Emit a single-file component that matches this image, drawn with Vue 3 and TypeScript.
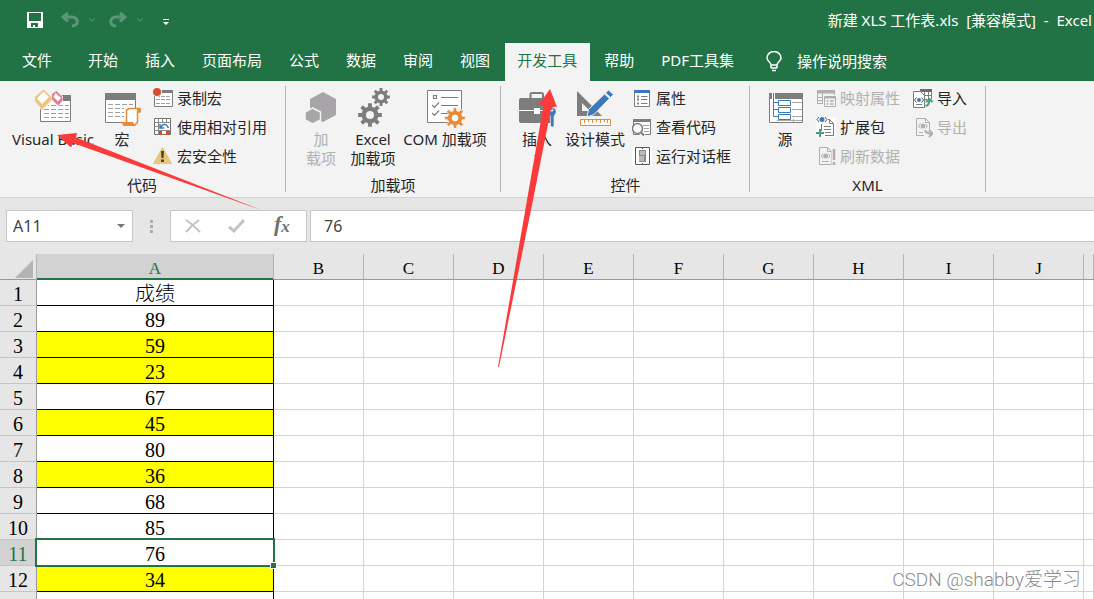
<script setup lang="ts">
import { ref } from 'vue'

interface SheetRow {
  n: number
  value: string
  marked: boolean
}

const tabs: string[] = ['文件', '开始', '插入', '页面布局', '公式', '数据', '审阅', '视图', '开发工具', '帮助', 'PDF工具集']
const activeTab = ref('开发工具')

const columns: string[] = ['A', 'B', 'C', 'D', 'E', 'F', 'G', 'H', 'I', 'J']
const values: string[] = ['成绩', '89', '59', '23', '67', '45', '80', '36', '68', '85', '76', '34']
const rows: SheetRow[] = values.map((value, i) => ({
  n: i + 1,
  value,
  marked: Number(value) < 60,
}))
const selectedRow = 11

const nameBox = ref('A11')
const formula = ref('76')

function gear(cx: number, cy: number, outer: number, inner: number, hole: number, teeth = 8): string {
  const points: string[] = []
  const step = (Math.PI * 2) / teeth
  const at = (r: number, a: number) => `${(cx + r * Math.cos(a)).toFixed(2)} ${(cy + r * Math.sin(a)).toFixed(2)}`
  for (let i = 0; i < teeth; i++) {
    const a = i * step
    points.push(at(inner, a - step * 0.3), at(outer, a - step * 0.2), at(outer, a + step * 0.2), at(inner, a + step * 0.3))
  }
  return `M${points.join('L')}ZM${cx - hole} ${cy}a${hole} ${hole} 0 1 0 ${hole * 2} 0a${hole} ${hole} 0 1 0 ${-hole * 2} 0Z`
}

const bigGear = gear(17, 27, 12, 8.5, 4)
const smallGear = gear(28, 9, 9, 6.5, 3)
const orangeGear = gear(30, 30, 10.5, 7.5, 3)
</script>

<template>
  <div class="window">
    <header class="top">
      <div class="titlebar">
        <div class="quick">
          <button class="q save" aria-label="保存">
            <svg width="16" height="16" viewBox="0 0 16 16"><path fill="#fff" fill-rule="evenodd" d="M0 0H16V16H0ZM2 1V9H14V1ZM4 11V15H6V13H8V15H11V11Z" /></svg>
          </button>
          <button class="q undo" aria-label="撤消">
            <svg width="18" height="16" viewBox="0 0 18 16" fill="none" stroke="#5b967a" stroke-width="3"><path d="M7 1L2 5L7 9.500M2 5H11C18 5 18 14 11 14" /></svg>
          </button>
          <button class="q chev" aria-label="撤消选项">
            <svg width="6" height="4" viewBox="0 0 6 4" fill="none" stroke="#5b967a"><path d="M0 .5L3 3L6 .5" /></svg>
          </button>
          <button class="q redo" aria-label="恢复">
            <svg width="18" height="16" viewBox="0 0 18 16" fill="none" stroke="#5b967a" stroke-width="3"><path d="M11 1L16 5L11 9.500M16 5H7C0 5 0 14 7 14" /></svg>
          </button>
          <button class="q chev" aria-label="恢复选项">
            <svg width="6" height="4" viewBox="0 0 6 4" fill="none" stroke="#5b967a"><path d="M0 .5L3 3L6 .5" /></svg>
          </button>
          <button class="q more" aria-label="自定义快速访问工具栏">
            <svg width="6" height="6" viewBox="0 0 6 6" fill="#fff"><path d="M0 0H6V1H0ZM0 3H6L3 6Z" /></svg>
          </button>
        </div>
        <div class="title">新建 XLS 工作表.xls&nbsp; [兼容模式]&nbsp; -&nbsp; Excel</div>
      </div>
      <nav class="tabs">
        <button v-for="t in tabs" :key="t" class="tab" :class="{ active: t === activeTab }" @click="activeTab = t">{{ t }}</button>
        <button class="tell">
          <svg width="16" height="21" viewBox="0 0 16 21" fill="none" stroke="#fff" stroke-width="1.500"><path d="M5 14C5 11 1 10.500 1 7A7 6.500 0 0 1 15 7C15 10.500 11 11 11 14ZM5 17H11M6 19.500H10M5 14V17M11 14V17" /></svg>
          <span>操作说明搜索</span>
        </button>
      </nav>
    </header>

    <section class="ribbon">
      <div class="group g-code">
        <div class="items">
          <button class="big w-vb">
            <svg width="40" height="40" viewBox="0 0 40 40">
              <path fill="#fff" stroke="#7d7d7d" d="M7.500 7.500H37.500V33.500H7.500Z" />
              <path fill="#7d7d7d" d="M30 7H38V13H30Z" />
              <path fill="none" stroke="#a0a0a0" stroke-dasharray="5 2" d="M11 17.500H36M11 21.500H36M11 25.500H36M11 29.500H36" />
              <path fill="#f3f3f3" d="M7 6H29V13L25 19L19 14L9 23L6 19Z" />
              <path fill="#ecc57c" d="M10.500 1.500L18.500 9V12L9 21.500L2 13V9Z" />
              <path fill="#fff" d="M10.500 3.500L16 9L9 16L4 10.500Z" />
              <path fill="#e27d94" d="M23.500 3L29.500 9V13L25 17.500L19 11.500V6Z" />
              <path fill="#fff" d="M22.500 5L28 10L25 13.500L20.500 9Z" />
            </svg>
            <span>Visual Basic</span>
          </button>
          <button class="big w-s macro">
            <svg width="40" height="40" viewBox="0 0 40 40">
              <path fill="#fff" stroke="#7d7d7d" d="M3.500 5.500H33.500V34.500H3.500Z" />
              <path fill="#7d7d7d" d="M3 5H34V12H3Z" />
              <path fill="none" stroke="#a0a0a0" stroke-dasharray="5 2" d="M6 16.500H31M6 20.500H22M6 24.500H22M6 28.500H22" />
              <path fill="#fff" stroke="#e68a3c" stroke-width="1.500" d="M24.500 22L27 20.500H38V24H35.500V34L33 37H24.500Z" />
              <path fill="#e68a3c" d="M20 34H31L33 38H22Q20 37 20 34ZM35 20H37Q39 20 39 24H35Z" />
            </svg>
            <span>宏</span>
          </button>
          <div class="stack">
            <button class="small">
              <svg width="20" height="21" viewBox="0 0 20 21">
                <path fill="#fff" stroke="#7d7d7d" d="M1.500 2.500H19.500V18.500H1.500Z" /><path fill="#7d7d7d" d="M8 2H20V5H8Z" />
                <path fill="none" stroke="#a0a0a0" stroke-dasharray="4 1" d="M3 8.500H18M3 11.500H18M3 15.500H18" />
                <circle cx="4" cy="4" r="5" fill="#f3f3f3" /><circle cx="4" cy="4" r="4" fill="#d2502c" />
              </svg>
              <span>录制宏</span>
            </button>
            <button class="small">
              <svg width="20" height="21" viewBox="0 0 20 21">
                <path fill="#fff" stroke="#6d6d6d" d="M1.500 1.500H17.500V17.500H1.500Z" />
                <path fill="none" stroke="#8a8a8a" d="M1 5.500H18M1 9.500H5M1 13.500H18M5.500 1V18M9.500 1V5M13.500 1V5" />
                <path fill="#fff" d="M6 6H17V13H6Z" />
                <path fill="none" stroke="#3c79b9" stroke-width="1.500" d="M7 7V11H11M7.500 10.500Q12 4 15.500 11" />
                <path fill="#d2502c" d="M6 14H9V18H6ZM13 14H17V18H13Z" />
              </svg>
              <span>使用相对引用</span>
            </button>
            <button class="small">
              <svg width="20" height="21" viewBox="0 0 20 21">
                <path fill="#ecc57c" stroke="#ecc57c" stroke-linejoin="round" d="M9.500 1.500L18.500 17.500H.5Z" />
                <path fill="#444" d="M8 5H11L10.500 12H8.500ZM8 13.500H11V16H8Z" />
              </svg>
              <span>宏安全性</span>
            </button>
          </div>
        </div>
        <div class="caption">代码</div>
      </div>

      <div class="group g-addins">
        <div class="items">
          <button class="big w-s" disabled>
            <svg width="40" height="40" viewBox="0 0 40 40" fill="#a8a5a8">
              <path d="M22 4L35 11V27L22 34L9 27V11Z" />
              <path stroke="#f3f3f3" stroke-width="1.500" d="M11.500 20L19.500 24V32L11.500 36L4 32V24Z" />
            </svg>
            <span>加<br />载项</span>
          </button>
          <button class="big w-m">
            <svg width="40" height="40" viewBox="0 0 40 40" fill="#7d7d7d" fill-rule="evenodd"><path :d="bigGear" /><path :d="smallGear" /></svg>
            <span>Excel<br />加载项</span>
          </button>
          <button class="big w-com">
            <svg width="40" height="40" viewBox="0 0 40 40">
              <path fill="#fff" stroke="#7d7d7d" d="M2.500 2.500H36.500V34.500H2.500Z" />
              <path fill="none" stroke="#7d7d7d" stroke-width="1.200" d="M8.500 7.500H11.500V10.500H8.500ZM16 9.500H33M7 17L9.500 19.500L14 14.500M16 17.500H33M7 25L9.500 27.500L14 22.500M16 25.500H24" />
              <path fill="#e68a3c" stroke="#fff" stroke-width=".7" fill-rule="evenodd" :d="orangeGear" />
            </svg>
            <span>COM 加载项</span>
          </button>
        </div>
        <div class="caption">加载项</div>
      </div>

      <div class="group g-controls">
        <div class="items">
          <button class="big w-s">
            <svg width="40" height="40" viewBox="0 0 40 40">
              <path fill="none" stroke="#7d7d7d" stroke-width="2" d="M13.500 10V6.500Q13.500 5 15 5H24.500Q26 5 26 6.500V10" />
              <rect x="2" y="10" width="35" height="25" rx="2" fill="#7d7d7d" />
              <path fill="#fff" d="M2 22H37V23H2ZM17 20H23V26H17Z" />
              <path fill="#3c79b9" stroke="#f3f3f3" stroke-width=".6" d="M33 19V23H36V19Q40 21 39 25L37 28V38Q35.500 40 33.500 38V28L31 25Q30 21 33 19Z" />
            </svg>
            <span>插入</span>
            <i class="caret"></i>
          </button>
          <button class="big w-design">
            <svg width="40" height="40" viewBox="0 0 40 40">
              <path fill="#7d7d7d" fill-rule="evenodd" d="M2 3L27 28H2ZM7 15V23H15Z" />
              <path fill="#3c79b9" stroke="#f3f3f3" d="M12 29L13.500 21.500L29.500 6L34.500 10.500L19 26.500ZM30.500 5L33.500 2L38.500 6.500L35.500 9.500Z" />
              <path fill="#fff" stroke="#e68a3c" d="M5.500 31.500H35.500V37.500H5.500Z" />
              <path fill="none" stroke="#e68a3c" d="M9.500 32V35M13.500 32V34M17.500 32V35M21.500 32V34M25.500 32V35M29.500 32V34M32.500 32V35" />
            </svg>
            <span>设计模式</span>
          </button>
          <div class="stack">
            <button class="small">
              <svg width="20" height="21" viewBox="0 0 20 21">
                <path fill="#fff" stroke="#7d7d7d" d="M2.500 2.500H17.500V18.500H2.500Z" /><path fill="#3c79b9" d="M2 2H18V5H2Z" />
                <path fill="none" stroke="#7d7d7d" d="M9 8.500H15.500M9 11.500H15.500M9 15.500H15.500" />
                <path fill="none" stroke="#7d7d7d" stroke-width="2" d="M5 8.500H7M5 11.500H7M5 15.500H7" />
              </svg>
              <span>属性</span>
            </button>
            <button class="small">
              <svg width="20" height="21" viewBox="0 0 20 21">
                <path fill="#fff" stroke="#7d7d7d" d="M1.500 2.500H18.500V17.500H1.500Z" /><path fill="#7d7d7d" d="M1 2H19V5H1Z" />
                <path fill="none" stroke="#a0a0a0" d="M11 8.500H17M12 11.500H17M12 14.500H17" />
                <path stroke="#f3f3f3" stroke-width="4" d="M8 15L12 19" />
                <circle cx="5.500" cy="11.500" r="5" fill="#fff" stroke="#7d7d7d" stroke-width="1.500" />
                <path stroke="#7d7d7d" stroke-width="2" d="M8.500 15L12 18.500" />
              </svg>
              <span>查看代码</span>
            </button>
            <button class="small">
              <svg width="20" height="21" viewBox="0 0 20 21">
                <path fill="#fff" d="M0 0H20V20H0Z" /><path fill="none" stroke="#555" d="M3.500 1.500H17.500V18.500H3.500Z" />
                <path fill="#8a8a8a" d="M7 4H14V16H7Z" /><path fill="#b9b9b9" d="M8 5H13V9H8ZM7 10H12V15H7Z" /><path fill="#555" d="M10 2H11V3H10ZM10 17H11V18H10Z" />
              </svg>
              <span>运行对话框</span>
            </button>
          </div>
        </div>
        <div class="caption">控件</div>
      </div>

      <div class="group g-xml">
        <div class="items">
          <button class="big w-s">
            <svg width="40" height="40" viewBox="0 0 40 40">
              <path fill="#fff" stroke="#7d7d7d" d="M4.500 5.500H37.500V34.500H4.500Z" /><path fill="#7d7d7d" d="M4 5H38V11H4Z" />
              <path stroke="#a8a8a8" d="M27 14.500H37M27 21.500H37M27 28.500H37M12 32.500H37M28.500 31V34" />
              <path fill="none" stroke="#fff" stroke-width="3" d="M8.500 5V11" />
              <path fill="#fff" stroke="#3c79b9" d="M8.500 5V28.500H13M8.500 14.500H13M8.500 21.500H13M13.500 12.500H25.500V17.500H13.500ZM13.500 19.500H25.500V24.500H13.500ZM13.500 26.500H25.500V31.500H13.500Z" />
            </svg>
            <span>源</span>
          </button>
          <div class="stack">
            <button class="small" disabled>
              <svg width="20" height="21" viewBox="0 0 20 21" fill="#f3f3f3" stroke="#b1aeb1">
                <path d="M1.500 2.500H18.500V15.500H1.500Z" /><path fill="#b1aeb1" d="M1.500 2.500H18.500V5H1.500Z" />
                <path d="M1 9.500H8M1 12.500H8M6.500 5V15" /><path stroke="none" d="M7 7H20V20H7Z" /><path d="M8.500 8.500H19.500V18.500H8.500Z" /><path stroke-width="2" d="M8 9.500H20" /><path stroke-width="1.500" d="M10.500 13H12.500M14 13H17.500M10.500 16H12.500M14 16H17.500" />
              </svg>
              <span>映射属性</span>
            </button>
            <button class="small">
              <svg width="20" height="21" viewBox="0 0 20 21">
                <path fill="#fff" d="M0 0H20V20H0Z" /><path fill="none" stroke="#7d7d7d" d="M5.500 7V14M9 18.500H17.500V6.500L13.500 2.500H12M13.500 2.500V6.500H17.500" />
                <path stroke="#7d7d7d" d="M8 9.500H15M8 12.500H15M9 15.500H15" />
                <circle cx="6" cy="2.500" r="2.500" fill="#3c79b9" /><path fill="none" stroke="#555" d="M3 0L1 2.500L3 5M9 0L11 2.500L9 5" />
                <path stroke="#4f9e83" stroke-width="2" d="M0 16H8M4 12V20" />
              </svg>
              <span>扩展包</span>
            </button>
            <button class="small" disabled>
              <svg width="20" height="21" viewBox="0 0 20 21" fill="none" stroke="#b1aeb1">
                <path d="M3.500 1.500H11.500L15.500 5.500V18.500H3.500ZM11.500 1.500V5.500H15.500M6 15.500H13" /><circle cx="9.500" cy="10" r="2" fill="#b1aeb1" /><path d="M7 7.500L5 10L7 12.500M12 7.500L14 10L12 12.500" /><path stroke="#f3f3f3" stroke-width="5" d="M18 2V19" /><path stroke-width="2.500" d="M18 3V14M18 16V19" />
              </svg>
              <span>刷新数据</span>
            </button>
          </div>
          <div class="stack">
            <button class="small">
              <svg width="20" height="21" viewBox="0 0 20 21">
                <path fill="#fff" stroke="#7d7d7d" d="M7.500 1.500H18.500V11.500H7.500Z" /><path fill="#6d6d6d" d="M7 1H19V4H7Z" /><path fill="none" stroke="#7d7d7d" d="M11.500 4V11M15.500 4V11M8 7.500H19" />
                <path fill="#fff" stroke="#7d7d7d" d="M.5 3.500H7.500L11.500 7.500V19.500H.5ZM3 16.500H9" /><circle cx="6" cy="12" r="2" fill="#3c79b9" /><path fill="none" stroke="#555" d="M3.500 9.500L1.500 12L3.500 14.500M8.500 9.500L10.500 12L8.500 14.500" />
                <path fill="none" stroke="#f3f3f3" stroke-width="4" d="M12.500 17.500Q16.500 17 16.500 11" /><path fill="none" stroke="#4f9e83" stroke-width="2" d="M12.500 18Q16.500 17.500 16.500 11M13 14L16.500 11L19.500 14" />
              </svg>
              <span>导入</span>
            </button>
            <button class="small" disabled>
              <svg width="20" height="21" viewBox="0 0 20 21" fill="none" stroke="#b1aeb1">
                <path d="M11 18.500H3.500V1.500H12.500L16.500 5.500V13M12.500 1.500V5.500H16.500M6 15.500H10" /><circle cx="10" cy="9" r="2" fill="#b1aeb1" /><path d="M7.500 6.500L5.500 9L7.500 11.500M12.500 6.500L14.500 9L12.500 11.500" /><path stroke-width="2" d="M12 13Q13 17 19 16.500M16 13L19.500 16.500L16 20" />
              </svg>
              <span>导出</span>
            </button>
          </div>
        </div>
        <div class="caption">XML</div>
      </div>
    </section>

    <section class="formula-bar">
      <div class="box name-box">
        <input v-model="nameBox" aria-label="名称框" />
        <button aria-label="名称列表"><i class="drop"></i></button>
      </div>
      <div class="dots"><i></i><i></i><i></i></div>
      <div class="box edit-box">
        <button aria-label="取消"><svg width="18" height="16" viewBox="0 0 18 16" fill="none" stroke="#c3c3c3" stroke-width="2"><path d="M2 2Q8 6 16 14M15 2Q8 7 2 14" /></svg></button>
        <button aria-label="输入"><svg width="18" height="16" viewBox="0 0 18 16" fill="none" stroke="#c3c3c3" stroke-width="3"><path d="M1 9L6 13L16 2" /></svg></button>
        <button class="fx" aria-label="插入函数">f<sub>x</sub></button>
      </div>
      <div class="box value-box"><input v-model="formula" aria-label="编辑栏" /></div>
    </section>

    <main class="sheet">
      <table>
        <colgroup>
          <col class="c-head" /><col class="c-a" /><col v-for="c in 9" :key="c" class="c-n" /><col />
        </colgroup>
        <thead>
          <tr>
            <th class="corner"><i></i></th>
            <th v-for="c in columns" :key="c" :class="{ current: c === 'A' }">{{ c }}</th>
            <th></th>
          </tr>
        </thead>
        <tbody>
          <tr v-for="r in rows" :key="r.n">
            <th :class="{ current: r.n === selectedRow }">{{ r.n }}</th>
            <td class="data" :class="{ marked: r.marked }">{{ r.value }}<div v-if="r.n === selectedRow" class="selection"></div></td>
            <td v-for="c in 10" :key="c"></td>
          </tr>
          <tr>
            <th></th>
            <td class="data"></td>
            <td v-for="c in 10" :key="c"></td>
          </tr>
        </tbody>
      </table>
    </main>

    <svg class="arrows" width="600" height="400" viewBox="0 0 600 400" fill="#fb3b3b">
      <path d="M57 135L77 133L76 137.500L261 210L73 143L71 147.500Z" />
      <path d="M550 89L557 107L551.500 106.500L533 200L499 367H498L527 200L543.500 105.500L538.500 105Z" />
    </svg>
    <div class="watermark">CSDN @shabby爱学习</div>
  </div>
</template>

<style>
body {
  margin: 0;
}
</style>

<style scoped>
.window {
  position: relative;
  display: flex;
  flex-direction: column;
  height: 100vh;
  overflow: hidden;
  background: #e6e6e6;
  color: #262626;
  font-family: "Noto Sans", "Noto Sans CJK SC", sans-serif;
  font-size: 15px;
  line-height: 19px;
}
button,
input {
  margin: 0;
  padding: 0;
  border: 0;
  background: none;
  color: inherit;
  font: inherit;
}
svg {
  display: block;
  flex: none;
}
.top {
  flex: none;
  background: #217346;
  color: #fff;
}
.titlebar {
  display: flex;
  align-items: flex-start;
  height: 43px;
  padding-left: 27px;
  box-sizing: border-box;
}
.quick {
  display: flex;
  align-items: center;
  height: 40px;
}
.undo {
  margin-left: 18px;
}
.chev {
  margin-left: 10px;
}
.redo {
  margin-left: 14px;
}
.more {
  margin: 4px 0 0 20px;
}
.title {
  margin: 0 2px 0 auto;
  line-height: 40px;
  white-space: nowrap;
}
.tabs {
  display: flex;
  gap: 2px;
  height: 38px;
  padding-left: 10px;
}
.tab {
  flex: none;
  padding: 0 13px 4px 12px;
  white-space: nowrap;
}
.tab:first-child {
  margin-right: 9px;
}
.tab.active {
  background: #f3f3f3;
  color: #217346;
}
.tell {
  display: flex;
  align-items: center;
  gap: 15px;
  margin-left: 17px;
  padding-bottom: 2px;
  white-space: nowrap;
}
.ribbon {
  display: flex;
  flex: none;
  padding-top: 3px;
  background: #f3f3f3;
  border-bottom: 1px solid #d0d0d0;
}
.group {
  position: relative;
  flex: none;
  box-sizing: border-box;
}
.group::after {
  content: "";
  position: absolute;
  top: 2px;
  right: 0;
  bottom: 5px;
  width: 1px;
  background: #b5b5b5;
}
.g-code {
  width: 286px;
  padding-left: 8px;
}
.g-addins {
  width: 215px;
  padding-left: 13px;
}
.g-controls {
  width: 249px;
  padding-left: 14px;
}
.g-xml {
  width: 236px;
  padding-left: 13px;
}
.items {
  display: flex;
  height: 87px;
}
.big {
  display: flex;
  flex: none;
  flex-direction: column;
  align-items: center;
  padding-top: 4px;
  white-space: nowrap;
}
.big span {
  margin-top: 2px;
}
.w-s {
  width: 44px;
}
.w-m {
  width: 60px;
}
.w-com {
  width: 84px;
}
.w-vb {
  width: 90px;
}
.w-design {
  width: 72px;
}
.macro {
  margin-left: 2px;
}
.caret {
  margin-top: 6px;
  border: 3px solid transparent;
  border-top-color: #555;
}
.stack {
  display: flex;
  flex-direction: column;
  margin-left: 9px;
}
.g-controls .stack {
  margin-left: 1px;
}
.stack + .stack {
  margin-left: 13px;
}
.small {
  display: flex;
  align-items: center;
  gap: 4px;
  height: 29px;
  white-space: nowrap;
}
.big:disabled,
.small:disabled {
  color: #b1b1b1;
}
.caption {
  height: 26px;
  margin-left: -14px;
  line-height: 29px;
  text-align: center;
}
.g-code .caption {
  margin-left: -10px;
}
.formula-bar {
  display: flex;
  flex: none;
  height: 32px;
  padding: 12px 0 12px 6px;
  color: #444;
  font-size: 16px;
}
.box {
  display: flex;
  box-sizing: border-box;
  border: 1px solid #c6c6c6;
  background: #fff;
}
.name-box {
  width: 127px;
}
.name-box input {
  flex: 1;
  min-width: 0;
  padding-left: 6px;
}
.name-box button {
  width: 22px;
}
.drop {
  display: block;
  width: 0;
  margin: 0 auto;
  border: 4px solid transparent;
  border-top-color: #777;
  border-bottom: 0;
}
.dots {
  display: flex;
  flex-direction: column;
  align-items: center;
  justify-content: center;
  gap: 2px;
  width: 37px;
}
.dots i {
  width: 3px;
  height: 3px;
  background: #adadad;
}
.edit-box {
  width: 137px;
  padding-right: 2px;
}
.edit-box button {
  display: flex;
  flex: 1;
  align-items: center;
  justify-content: center;
}
.edit-box .fx {
  padding-bottom: 4px;
  color: #707070;
  font: italic bold 22px/24px "Liberation Serif", serif;
}
.fx sub {
  align-self: flex-end;
  font-size: 17px;
  line-height: 20px;
}
.value-box {
  flex: 1;
  min-width: 0;
  margin-left: 3px;
  border-right: 0;
}
.value-box input {
  flex: 1;
  min-width: 0;
  padding-left: 13px;
}
.sheet {
  flex: 1;
  min-height: 0;
  overflow: hidden;
}
table {
  width: 100%;
  table-layout: fixed;
  border-collapse: separate;
  border-spacing: 0;
  color: #000;
  font-family: "Liberation Serif", "Noto Sans CJK SC", serif;
  font-size: 20px;
  line-height: 22px;
}
.c-head {
  width: 37px;
}
.c-a {
  width: 237px;
}
.c-n {
  width: 90px;
}
th,
td {
  height: 25px;
  box-sizing: content-box;
  padding: 0;
  border-right: 1px solid #d4d4d4;
  border-bottom: 1px solid #d4d4d4;
  font-weight: 300;
  text-align: center;
  overflow: hidden;
}
tbody th,
tbody td {
  height: 22px;
  padding-top: 3px;
}
td {
  background: #fff;
}
thead th {
  height: 21px;
  padding-top: 4px;
  border-right-color: #b4b4b4;
  border-bottom-color: #999;
  background: #e6e6e6;
  font-size: 17px;
  line-height: 21px;
}
tbody th {
  border-right-color: #999;
  border-bottom-color: #c4c4c4;
  background: #e6e6e6;
}
th.current {
  background: #d2d2d2;
  color: #217346;
}
thead th.current {
  box-shadow: inset 0 -1px #217346;
  border-bottom-color: #217346;
}
.corner i {
  display: block;
  width: 0;
  margin: 0 3px 0 auto;
  border-left: 18px solid transparent;
  border-bottom: 18px solid #b4b4b4;
}
.data {
  position: relative;
  border-color: #000;
  overflow: visible;
}
.data.marked {
  background: #ff0;
}
.selection {
  position: absolute;
  inset: -2px;
  z-index: 1;
  border: 2px solid #217346;
}
.selection::after {
  content: "";
  position: absolute;
  right: -4px;
  bottom: -4px;
  width: 5px;
  height: 5px;
  border: 1px solid #fff;
  background: #217346;
}
.arrows {
  position: absolute;
  top: 0;
  left: 0;
  z-index: 2;
  pointer-events: none;
}
.watermark {
  position: absolute;
  right: 13px;
  bottom: 6px;
  z-index: 2;
  color: #8c8c8c;
  font: 300 19px/26px Roboto, "Noto Sans CJK SC", sans-serif;
}
</style>
